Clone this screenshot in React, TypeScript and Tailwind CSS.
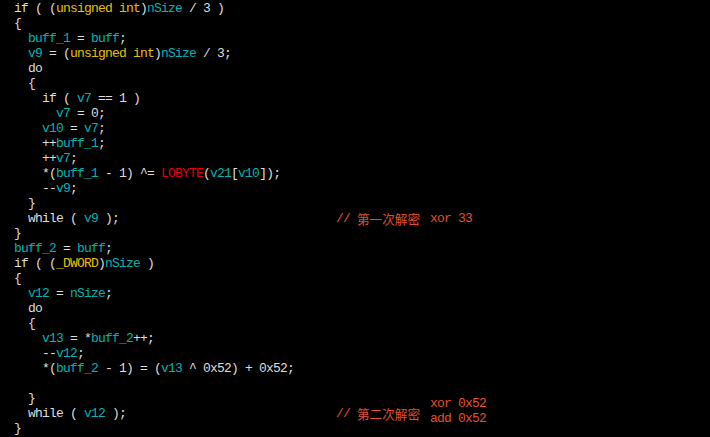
type Seg = [string, string?]

const W = "text-[#dedede]"
const C = "text-[#00b4b4]"
const Y = "text-[#e6c000]"
const R = "text-[#e00010]"

const lines: Seg[][] = [
  [["if ( ("], ["unsigned int", Y], [")"], ["nSize", C], [" / 3 )"]],
  [["{"]],
  [["  "], ["buff_1", C], [" = "], ["buff", C], [";"]],
  [["  "], ["v9", C], [" = ("], ["unsigned int", Y], [")"], ["nSize", C], [" / 3;"]],
  [["  do"]],
  [["  {"]],
  [["    if ( "], ["v7", C], [" == 1 )"]],
  [["      "], ["v7", C], [" = 0;"]],
  [["    "], ["v10", C], [" = "], ["v7", C], [";"]],
  [["    ++"], ["buff_1", C], [";"]],
  [["    ++"], ["v7", C], [";"]],
  [["    *("], ["buff_1", C], [" - 1) ^= "], ["LOBYTE", R], ["("], ["v21", C], ["["], ["v10", C], ["]);"]],
  [["    --"], ["v9", C], [";"]],
  [["  }"]],
  [["  while ( "], ["v9", C], [" );"]],
  [["}"]],
  [["buff_2", C], [" = "], ["buff", C], [";"]],
  [["if ( ("], ["_DWORD", Y], [")"], ["nSize", C], [" )"]],
  [["{"]],
  [["  "], ["v12", C], [" = "], ["nSize", C], [";"]],
  [["  do"]],
  [["  {"]],
  [["    "], ["v13", C], [" = *"], ["buff_2", C], ["++;"]],
  [["    --"], ["v12", C], [";"]],
  [["    *("], ["buff_2", C], [" - 1) = ("], ["v13", C], [" ^ 0x52) + 0x52;"]],
  [[""]],
  [["  }"]],
  [["  while ( "], ["v12", C], [" );"]],
  [["}"]],
]

// red notes added on top of the decompiler output
const notes: Record<number, { title: string; ops: string[]; shift: string }> = {
  14: { title: "第一次解密", ops: ["xor 33"], shift: "mt-0" },
  27: { title: "第二次解密", ops: ["xor 0x52", "add 0x52"], shift: "-mt-[10px]" },
}

export default function App() {
  return (
    <div
      className="w-[710px] h-[437px] bg-black pl-[14px] pt-[1px] overflow-hidden text-[13px] tracking-[-0.8px]"
      style={{ fontFamily: '"Liberation Mono", "DejaVu Sans Mono", monospace' }}
    >
      {lines.map((segs, i) => {
        const note = notes[i]
        return (
          <div key={i} className={`flex items-start h-[15px] leading-[15px] whitespace-pre ${W}`}>
            <span className={note ? "w-[322px] shrink-0" : ""}>
              {segs.map(([t, c], j) => (
                <span key={j} className={c ?? W}>{t}</span>
              ))}
            </span>
            {note && (
              <>
                <span className="text-[#e0502e]">// </span>
                <span
                  className="text-[12.6px] tracking-normal text-[#e0502e]"
                  style={{ fontFamily: '"Noto Sans CJK SC", sans-serif' }}
                >
                  {note.title}
                </span>
                <div className={`flex flex-col ml-[10px] text-[#e0502e] ${note.shift}`}>
                  {note.ops.map((op) => (
                    <span key={op}>{op}</span>
                  ))}
                </div>
              </>
            )}
          </div>
        )
      })}
    </div>
  )
}
